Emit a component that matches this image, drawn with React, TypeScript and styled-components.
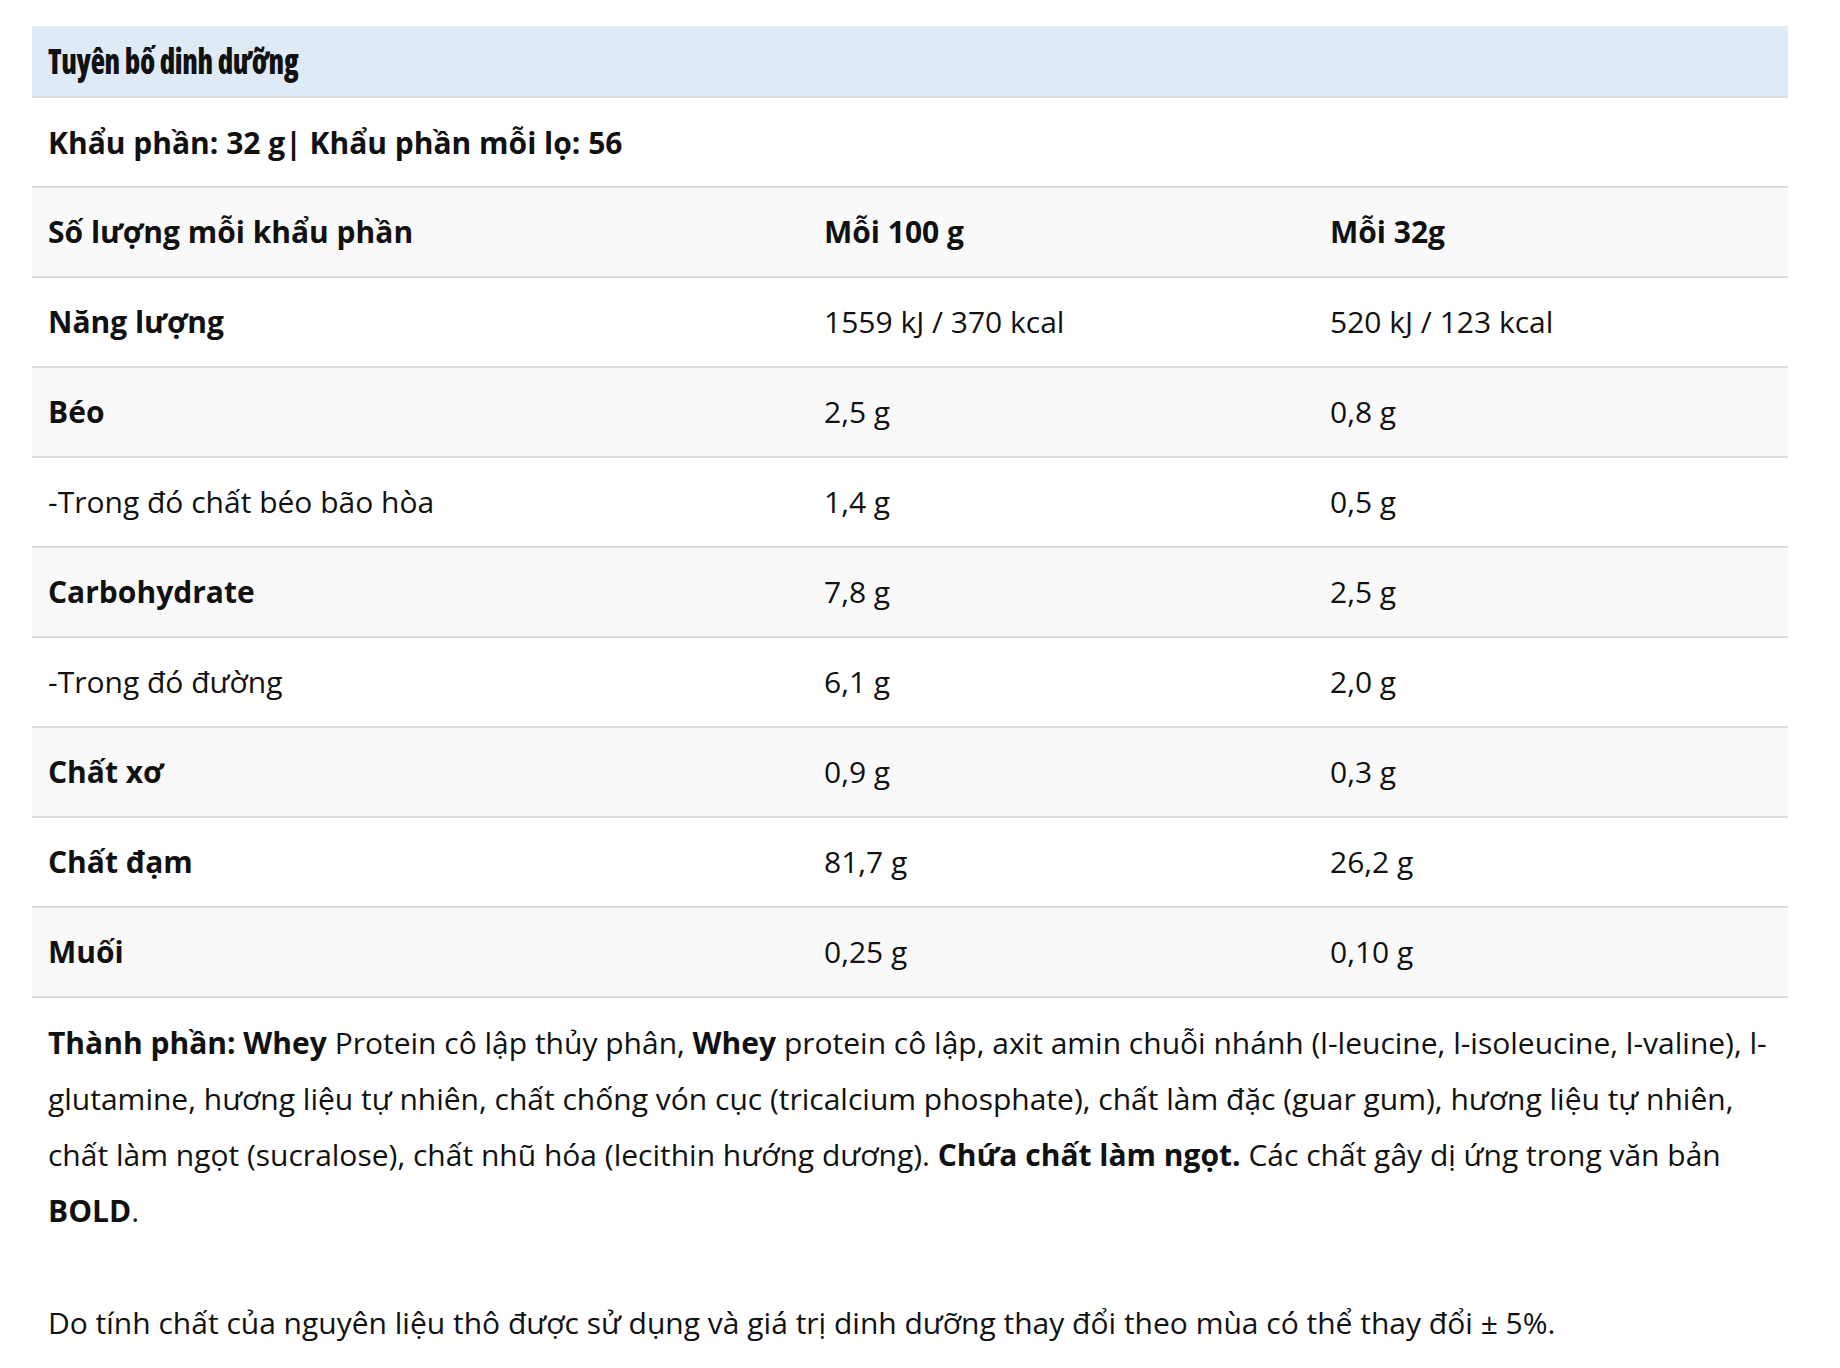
import React from "react";
import styled, { createGlobalStyle } from "styled-components";

const GlobalStyle = createGlobalStyle`
  html, body {
    margin: 0;
    padding: 0;
    background: #ffffff;
  }
  body {
    font-family: "Open Sans", "Noto Sans", "Liberation Sans", sans-serif;
    color: #111111;
    -webkit-font-smoothing: antialiased;
  }
`;

const Page = styled.div`
  width: 1756px;
  margin: 0 0 0 32px;
  padding-top: 26px;
  padding-bottom: 20px;
`;

const TitleBar = styled.div`
  display: flex;
  align-items: center;
  height: 70px;
  padding: 0 16px;
  background: #deebf7;
  border-bottom: 2px solid #dcdcdc;
`;

const Title = styled.h2`
  display: inline-block;
  margin: 0;
  font-family: "Open Sans", "DejaVu Sans Condensed", sans-serif;
  font-stretch: 75%;
  font-weight: 800;
  font-size: 36px;
  line-height: 1;
  color: #111111;
  letter-spacing: -0.4px;
  transform: scaleX(0.82);
  transform-origin: left center;
`;

const ServingRow = styled.div`
  display: flex;
  align-items: center;
  height: 88px;
  padding: 0 16px;
  border-bottom: 2px solid #dcdcdc;
  font-size: 30px;
  font-weight: 700;
`;

const Table = styled.table`
  width: 100%;
  border-collapse: collapse;
  table-layout: fixed;
  font-size: 30px;
`;

const Row = styled.tr<{ $shade: boolean }>`
  background: ${(p) => (p.$shade ? "#f9f9f9" : "#ffffff")};
  border-bottom: 2px solid #dcdcdc;
`;

const Cell = styled.td<{ $bold?: boolean }>`
  height: 88px;
  padding: 0 16px;
  vertical-align: middle;
  font-weight: ${(p) => (p.$bold ? 700 : 400)};
  line-height: 40px;
  white-space: nowrap;
`;

const Notes = styled.div`
  padding: 17px 16px 0;
  font-size: 30px;
  line-height: 56px;
`;

const Para = styled.p`
  margin: 0;
  & + & {
    margin-top: 56px;
  }
`;

type Item = { label: string; bold: boolean; per100: string; perServing: string };

const rows: Item[] = [
  { label: "Năng lượng", bold: true, per100: "1559 kJ / 370 kcal", perServing: "520 kJ / 123 kcal" },
  { label: "Béo", bold: true, per100: "2,5 g", perServing: "0,8 g" },
  { label: "-Trong đó chất béo bão hòa", bold: false, per100: "1,4 g", perServing: "0,5 g" },
  { label: "Carbohydrate", bold: true, per100: "7,8 g", perServing: "2,5 g" },
  { label: "-Trong đó đường", bold: false, per100: "6,1 g", perServing: "2,0 g" },
  { label: "Chất xơ", bold: true, per100: "0,9 g", perServing: "0,3 g" },
  { label: "Chất đạm", bold: true, per100: "81,7 g", perServing: "26,2 g" },
  { label: "Muối", bold: true, per100: "0,25 g", perServing: "0,10 g" },
];

export default function App() {
  return (
    <>
      <GlobalStyle />
      <Page>
        <TitleBar>
          <Title>Tuyên bố dinh dưỡng</Title>
        </TitleBar>
        <ServingRow>Khẩu phần: 32 g| Khẩu phần mỗi lọ: 56</ServingRow>
        <Table>
          <colgroup>
            <col style={{ width: "776px" }} />
            <col style={{ width: "506px" }} />
            <col />
          </colgroup>
          <tbody>
            <Row $shade={true}>
              <Cell $bold>Số lượng mỗi khẩu phần</Cell>
              <Cell $bold>Mỗi 100 g</Cell>
              <Cell $bold>Mỗi 32g</Cell>
            </Row>
            {rows.map((r, i) => (
              <Row key={r.label} $shade={i % 2 === 1}>
                <Cell $bold={r.bold}>{r.label}</Cell>
                <Cell>{r.per100}</Cell>
                <Cell>{r.perServing}</Cell>
              </Row>
            ))}
          </tbody>
        </Table>
        <Notes>
          <Para>
            <strong>Thành phần: Whey</strong> Protein cô lập thủy phân, <strong>Whey</strong> protein cô lập, axit amin
            chuỗi nhánh (l-leucine, l-isoleucine, l-valine), l-glutamine, hương liệu tự nhiên, chất chống vón cục
            (tricalcium phosphate), chất làm đặc (guar gum), hương liệu tự nhiên, chất làm ngọt (sucralose), chất nhũ
            hóa (lecithin hướng dương). <strong>Chứa chất làm ngọt.</strong> Các chất gây dị ứng trong văn bản{" "}
            <strong>BOLD</strong>.
          </Para>
          <Para>
            Do tính chất của nguyên liệu thô được sử dụng và giá trị dinh dưỡng thay đổi theo mùa có thể thay đổi ± 5%.
          </Para>
        </Notes>
      </Page>
    </>
  );
}
